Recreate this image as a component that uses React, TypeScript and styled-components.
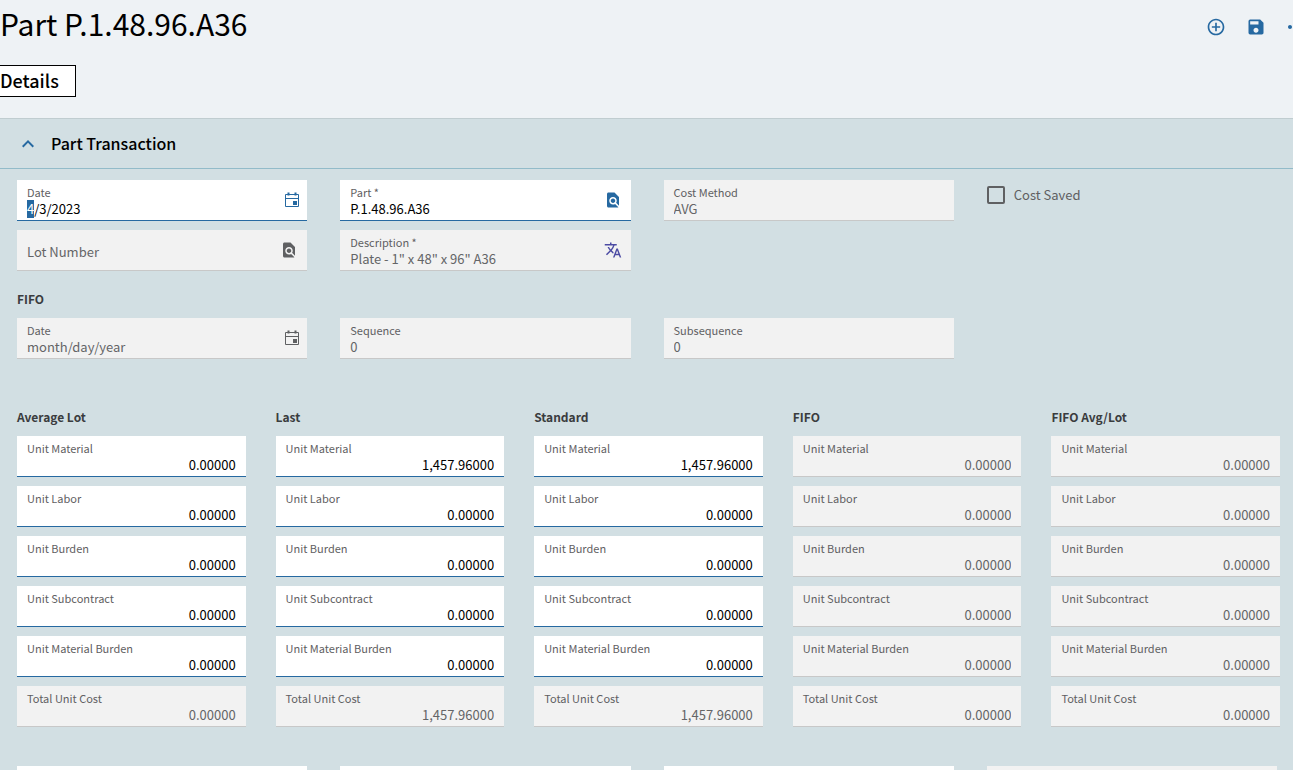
import React, { useEffect, useId, useRef } from 'react';
import styled, { createGlobalStyle } from 'styled-components';
import {
  MdAddCircleOutline,
  MdExpandLess,
  MdFindInPage,
  MdMoreHoriz,
  MdSave,
  MdTranslate,
} from 'react-icons/md';

const blue = '#2669a1';
const grey = '#5f6062';

const GlobalStyle = createGlobalStyle`
  * { box-sizing: border-box; }
  body {
    margin: 0;
    background: #d2dfe3;
    font-family: "Source Sans Pro", "Noto Sans CJK SC", "Noto Sans", sans-serif;
    color: #000;
  }
  button, input { font: inherit; }
`;

const Page = styled.main`
  height: 100vh;
  overflow: hidden;
`;

const Header = styled.header`
  background: #eef2f5;
  padding-bottom: 21px;
`;

const TitleRow = styled.div`
  display: flex;
  justify-content: space-between;
  overflow: hidden;
`;

const Title = styled.h1`
  margin: 0 0 19px;
  font-size: 30px;
  line-height: 46px;
  font-weight: 400;
`;

const Actions = styled.div`
  display: flex;
  align-items: center;
  height: 54px;
  margin-right: -23px;
`;

const IconButton = styled.button<{ $size: number; $color?: string }>`
  display: flex;
  flex: none;
  align-items: center;
  justify-content: center;
  width: ${(p) => p.$size}px;
  height: ${(p) => p.$size}px;
  padding: 0;
  border: 0;
  background: none;
  color: ${(p) => p.$color ?? blue};
`;

const Tab = styled.button`
  display: block;
  height: 32px;
  padding: 0 16px 2px 0;
  border: 1px solid #000;
  border-left: 0;
  background: #fff;
  color: #000;
  font-size: 18px;
  line-height: 28px;
  font-weight: 500;
`;

const SectionHeader = styled.div`
  display: flex;
  align-items: center;
  gap: 11px;
  height: 51px;
  padding-left: 16px;
  border-top: 1px solid #c0cdd0;
  border-bottom: 1px solid #92bbc9;
`;

const SectionTitle = styled.h2`
  margin: 0;
  padding-bottom: 2px;
  font-size: 16px;
  line-height: 24px;
  font-weight: 500;
`;

const FormGrid = styled.div`
  display: grid;
  grid-template-columns: repeat(4, 1fr);
  gap: 9px 33px;
  padding: 0 16px 0 17px;
`;

const TopGrid = styled(FormGrid)`
  padding-top: 11px;
`;

const GroupTitle = styled.h3`
  margin: 0;
  padding-bottom: 9px;
  font-size: 12px;
  line-height: 20px;
  font-weight: 700;
  color: #3a3c3e;
`;

const FifoGroup = styled.section`
  padding-top: 18px;

  > ${GroupTitle} {
    padding-left: 17px;
  }
`;

const CostGrid = styled.div`
  display: grid;
  grid-template-columns: repeat(5, 1fr);
  gap: 30px;
  padding: 48px 13px 39px 17px;
`;

const CostColumn = styled.section`
  display: flex;
  flex-direction: column;
  gap: 9px;

  > ${GroupTitle} {
    padding-bottom: 0;
  }
`;

const FieldBox = styled.div<{ $readOnly?: boolean }>`
  display: flex;
  align-items: center;
  min-width: 0;
  height: 41px;
  padding: 0 5px 0 10px;
  background: ${(p) => (p.$readOnly ? '#f2f2f2' : '#fff')};
  border-bottom: 1px solid ${(p) => (p.$readOnly ? '#c8c8c8' : blue)};
`;

const FieldText = styled.div<{ $unlabelled?: boolean }>`
  display: flex;
  flex: 1;
  flex-direction: column;
  min-width: 0;
  padding-top: ${(p) => (p.$unlabelled ? 4 : 2)}px;
`;

const Label = styled.label`
  font-size: 11px;
  line-height: 16px;
  color: ${grey};
`;

const Input = styled.input<{ $numeric?: boolean }>`
  width: 100%;
  height: 18px;
  padding: 0 ${(p) => (p.$numeric ? 5 : 0)}px 0 0;
  border: 0;
  outline: 0;
  background: none;
  font-size: 13px;
  line-height: 18px;
  text-align: ${(p) => (p.$numeric ? 'right' : 'left')};
  color: ${(p) => (p.readOnly ? '#646567' : '#000')};
  caret-color: transparent;

  &::placeholder {
    color: #646567;
    opacity: 1;
  }
  &::selection {
    background: ${blue};
    color: #fff;
  }
`;

const CheckLabel = styled.label`
  display: flex;
  align-items: center;
  align-self: start;
  gap: 9px;
  height: 29px;
  font-size: 13px;
  line-height: 20px;
  color: ${grey};
`;

const Checkbox = styled.input`
  appearance: none;
  width: 18px;
  height: 18px;
  margin: 0;
  border: 2px solid ${grey};
  border-radius: 2px;
`;

const CalendarIcon = () => (
  <svg width="16" height="16" viewBox="0 0 16 16" fill="none" stroke="currentColor">
    <path d="M1.5 2.5h13v12h-13zM1.5 6.5h13" />
    <path d="M4.5 0.5v3M11.5 0.5v3" strokeWidth="2" />
    <path d="M9 9h4v4h-4z" fill="currentColor" stroke="none" />
  </svg>
);

type FieldProps = {
  label?: string;
  value?: string;
  placeholder?: string;
  readOnly?: boolean;
  numeric?: boolean;
  name?: string;
  selectFirst?: boolean;
  action?: React.ReactNode;
};

function Field({ label, value = '', placeholder, readOnly, numeric, name, selectFirst, action }: FieldProps) {
  const id = useId();
  const ref = useRef<HTMLInputElement>(null);
  useEffect(() => {
    if (selectFirst && ref.current) {
      ref.current.focus();
      ref.current.setSelectionRange(0, 1);
    }
  }, [selectFirst]);
  return (
    <FieldBox $readOnly={readOnly}>
      <FieldText $unlabelled={!label}>
        {label && <Label htmlFor={id}>{label}</Label>}
        <Input
          id={id}
          ref={ref}
          aria-label={label ? undefined : name ?? placeholder}
          defaultValue={value}
          placeholder={placeholder}
          readOnly={readOnly}
          $numeric={numeric}
        />
      </FieldText>
      {action}
    </FieldBox>
  );
}

const zero = '0.00000';
const last = '1,457.96000';
const costLabels = [
  'Unit Material',
  'Unit Labor',
  'Unit Burden',
  'Unit Subcontract',
  'Unit Material Burden',
  'Total Unit Cost',
];
const costColumns = [
  { title: 'Average Lot', material: zero, locked: false },
  { title: 'Last', material: last, locked: false },
  { title: 'Standard', material: last, locked: false },
  { title: 'FIFO', material: zero, locked: true },
  { title: 'FIFO Avg/Lot', material: zero, locked: true },
];

export default function App() {
  return (
    <Page>
      <GlobalStyle />
      <Header>
        <TitleRow>
          <Title>Part P.1.48.96.A36</Title>
          <Actions>
            <IconButton $size={40} aria-label="Add"><MdAddCircleOutline size={20} /></IconButton>
            <IconButton $size={40} aria-label="Save"><MdSave size={20} /></IconButton>
            <IconButton $size={40} aria-label="More"><MdMoreHoriz size={24} /></IconButton>
          </Actions>
        </TitleRow>
        <Tab>Details</Tab>
      </Header>

      <SectionHeader>
        <IconButton $size={24} aria-label="Collapse Part Transaction"><MdExpandLess size={24} /></IconButton>
        <SectionTitle>Part Transaction</SectionTitle>
      </SectionHeader>

      <TopGrid>
        <Field
          label="Date"
          value="4/3/2023"
          selectFirst
          action={<IconButton $size={20} aria-label="Pick date"><CalendarIcon /></IconButton>}
        />
        <Field
          label="Part *"
          value="P.1.48.96.A36"
          action={<IconButton $size={26} aria-label="Find part"><MdFindInPage size={18} /></IconButton>}
        />
        <Field label="Cost Method" value="AVG" readOnly />
        <CheckLabel><Checkbox type="checkbox" />Cost Saved</CheckLabel>
        <Field
          placeholder="Lot Number"
          readOnly
          action={<IconButton $size={26} $color={grey} aria-label="Find lot"><MdFindInPage size={18} /></IconButton>}
        />
        <Field
          label="Description *"
          value={'Plate - 1" x 48" x 96" A36'}
          readOnly
          action={<IconButton $size={26} $color="#4c4ba3" aria-label="Translate"><MdTranslate size={18} /></IconButton>}
        />
      </TopGrid>

      <FifoGroup>
        <GroupTitle>FIFO</GroupTitle>
        <FormGrid>
          <Field
            label="Date"
            placeholder="month/day/year"
            readOnly
            action={<IconButton $size={20} $color={grey} aria-label="Pick FIFO date"><CalendarIcon /></IconButton>}
          />
          <Field label="Sequence" value="0" readOnly />
          <Field label="Subsequence" value="0" readOnly />
        </FormGrid>
      </FifoGroup>

      <CostGrid>
        {costColumns.map((col) => (
          <CostColumn key={col.title}>
            <GroupTitle>{col.title}</GroupTitle>
            {costLabels.map((label, i) => (
              <Field
                key={label}
                label={label}
                value={i === 0 || i === 5 ? col.material : zero}
                readOnly={col.locked || i === 5}
                numeric
              />
            ))}
          </CostColumn>
        ))}
      </CostGrid>

      <FormGrid>
        <Field name="Quantity" />
        <Field name="Unit" />
        <Field name="Location" />
        <Field name="Status" readOnly />
      </FormGrid>
    </Page>
  );
}
